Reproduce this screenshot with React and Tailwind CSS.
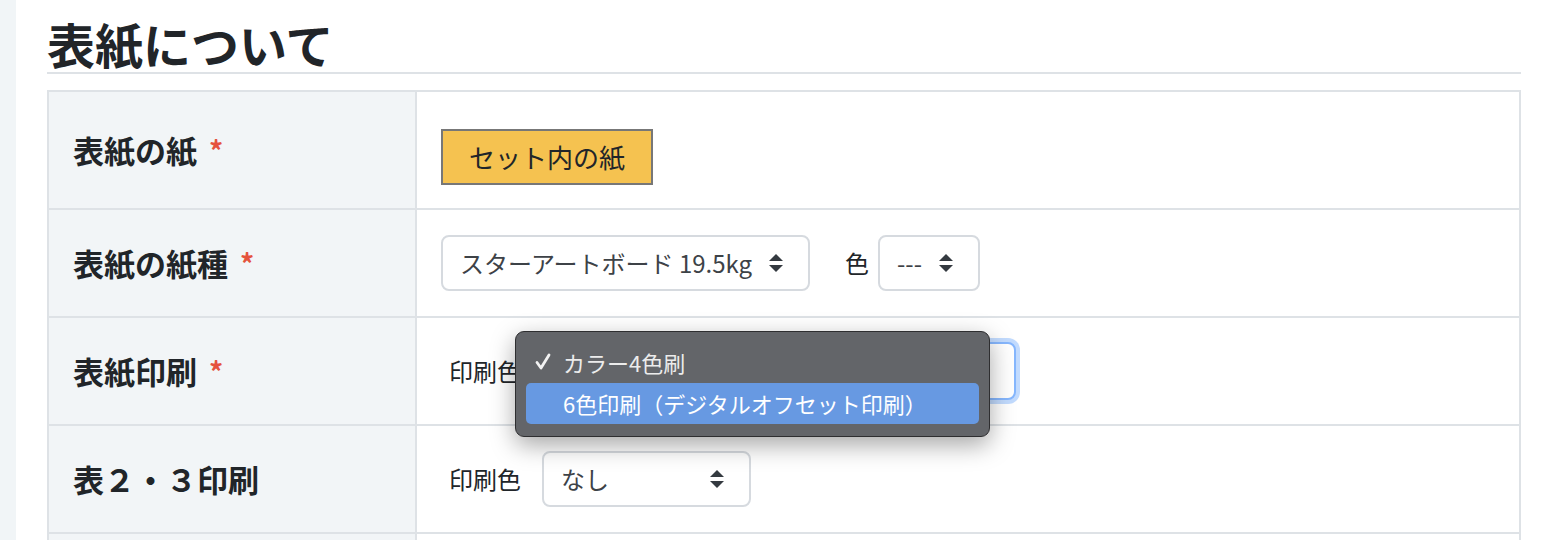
import React from "react";

const font = { fontFamily: '"Noto Sans CJK JP", "Noto Sans", sans-serif' };

function SortArrows() {
  return (
    <svg width="16" height="20" viewBox="0 0 16 20" className="shrink-0">
      <path d="M8 1 L15 8 H1 Z" fill="#343a40" />
      <path d="M8 19 L15 12 H1 Z" fill="#343a40" />
    </svg>
  );
}

function CheckMark() {
  return (
    <svg width="18" height="18" viewBox="0 0 18 18" className="ml-[8px] mr-[11px] shrink-0">
      <path d="M3 9.5 L7 15 L15 2" fill="none" stroke="#f2f2f2" strokeWidth="2.8" strokeLinecap="round" strokeLinejoin="round" />
    </svg>
  );
}

function FakeSelect({ value, className = "" }) {
  return (
    <div
      className={`h-[56px] flex items-center justify-between border-2 border-[#d6dadf] rounded-[8px] bg-white pl-[17px] pr-[24px] text-[24px] text-[#3d4247] ${className}`}
    >
      <span>{value}</span>
      <SortArrows />
    </div>
  );
}

function Label({ children, required }) {
  return (
    <div className="w-[368px] shrink-0 bg-[#f2f5f7] border-r-2 border-[#dee2e6] flex items-center pl-[24px] text-[31px] font-bold text-[#212529]">
      {children}
      {required && <span className="text-[#e5533d] ml-[12px] text-[28px]">*</span>}
    </div>
  );
}

export default function App() {
  return (
    <div className="flex w-[1552px] h-[540px] overflow-hidden bg-white" style={font}>
      <div className="w-4 shrink-0 bg-[#f1f5f7]" />
      <div className="flex-1 px-[31px]">
        <h2 className="pt-[14px] text-[48px] leading-[58px] font-bold text-[#212529] border-b-2 border-[#dee2e6]">
          表紙について
        </h2>
        <div className="mt-[16px] border-2 border-[#dee2e6]">
          <div className="flex h-[118px] border-b-2 border-[#dee2e6]">
            <Label required>表紙の紙</Label>
            <div className="flex items-center pl-[24px] pt-[13px]">
              <div className="w-[212px] h-[56px] bg-[#f5c250] border-2 border-[#777777] flex items-center justify-center text-[26px] text-[#212529]">
                セット内の紙
              </div>
            </div>
          </div>
          <div className="flex h-[108px] border-b-2 border-[#dee2e6]">
            <Label required>表紙の紙種</Label>
            <div className="flex items-center pl-[24px]">
              <FakeSelect value="スターアートボード 19.5kg" className="w-[369px]" />
              <span className="ml-[35px] mr-[9px] text-[24px] text-[#212529]">色</span>
              <FakeSelect value="---" className="w-[102px]" />
            </div>
          </div>
          <div className="flex h-[108px] border-b-2 border-[#dee2e6]">
            <Label required>表紙印刷</Label>
            <div className="relative flex-1 flex items-center pl-[32px]">
              <span className="mr-[21px] text-[24px] text-[#212529]">印刷色</span>
              <div className="w-[474px] h-[58px] rounded-[8px] border-2 border-[#86b7fe] bg-white shadow-[0_0_0_4px_rgba(13,110,253,0.25)]" />
              <div className="absolute left-[98px] top-[13px] w-[475px] h-[106px] rounded-[9px] bg-[#636569] border border-[#2e2e30] shadow-[0_8px_24px_rgba(0,0,0,0.35)] px-[10px] pt-[9px] z-10">
                <div className="h-[42px] flex items-center text-[22px] text-[#ececec]">
                  <CheckMark />
                  <span>カラー4色刷</span>
                </div>
                <div className="h-[41px] flex items-center rounded-[5px] bg-[#6799e2] pl-[37px] text-[22px] text-white">
                  6色印刷（デジタルオフセット印刷）
                </div>
              </div>
            </div>
          </div>
          <div className="flex h-[108px] border-b-2 border-[#dee2e6]">
            <Label>表２・３印刷</Label>
            <div className="flex items-center pl-[32px]">
              <span className="mr-[21px] text-[24px] text-[#212529]">印刷色</span>
              <FakeSelect value="なし" className="w-[209px]" />
            </div>
          </div>
          <div className="flex h-[108px]">
            <Label />
            <div />
          </div>
        </div>
      </div>
    </div>
  );
}
